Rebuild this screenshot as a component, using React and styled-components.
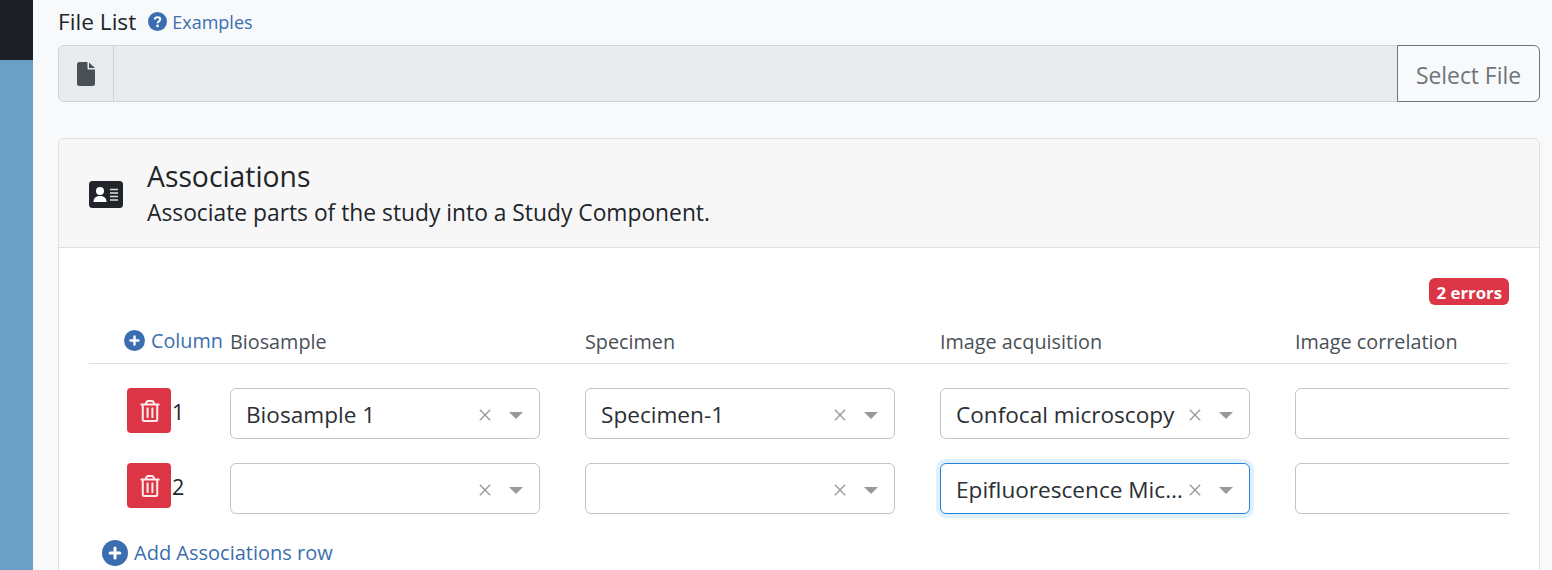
import React from 'react'
import styled, { createGlobalStyle } from 'styled-components'
import { FaRegTrashAlt } from 'react-icons/fa'

const Global = createGlobalStyle`
  html, body { margin: 0; height: 570px; overflow: hidden; }
  body { font-family: "Open Sans", "Noto Sans", sans-serif; color: #212529; background: #f8f9fa; }
  * { box-sizing: border-box; }
`

const Page = styled.div`
  display: flex;
  height: 570px;
  overflow: hidden;
`
const Sidebar = styled.aside`
  width: 33px;
  flex: none;
  background: #6b9fc3;
  &::before { content: ''; display: block; height: 60px; background: #1c2024; }
`
const Main = styled.main`
  flex: 1;
  min-width: 0;
  padding: 6px 12px 0 25px;
`
const LabelRow = styled.div`
  display: flex;
  align-items: center;
  height: 31px;
  margin-bottom: 8px;
`
const Label = styled.span`
  font-size: 22.7px;
  margin-right: 12px;
`
const LinkText = styled.a`
  color: #3b6eb0;
  font-size: ${p => p.$size || 18}px;
  display: inline-flex;
  align-items: center;
  gap: ${p => p.$gap || 6}px;
`
const FileGroup = styled.div`
  display: flex;
  height: 57px;
`
const FileIconBox = styled.div`
  width: 56px;
  display: flex;
  align-items: center;
  justify-content: center;
  background: #e9ecef;
  border: 1px solid #ced4da;
  border-radius: 6px 0 0 6px;
`
const FileInput = styled.div`
  flex: 1;
  background: #e9ecef;
  border-top: 1px solid #ced4da;
  border-bottom: 1px solid #ced4da;
`
const SelectFile = styled.button`
  width: 143px;
  padding: 4px 0 0;
  font: inherit;
  font-size: 22.8px;
  color: #6c757d;
  background: transparent;
  border: 1px solid #6c757d;
  border-radius: 0 6px 6px 0;
`
const Card = styled.section`
  margin-top: 36px;
  background: #fff;
  border: 1px solid #dfdfdf;
  border-radius: 6px 6px 0 0;
  height: 450px;
`
const CardHeader = styled.header`
  height: 109px;
  display: flex;
  align-items: center;
  padding: 2px 0 0 30px;
  gap: 24px;
  background: #f7f7f7;
  border-bottom: 1px solid #dfdfdf;
  border-radius: 6px 6px 0 0;
`
const Title = styled.h5`
  margin: -1px 0 1px;
  font-size: 28.3px;
  font-weight: 400;
  line-height: 36px;
`
const Subtitle = styled.div`
  padding-top: 2px;
  font-size: 22.8px;
  line-height: 32px;
`
const CardBody = styled.div`
  padding: 30px 30px 0;
`
const BadgeRow = styled.div`
  display: flex;
  justify-content: flex-end;
  height: 46px;
`
const Badge = styled.span`
  height: 27px;
  padding: 1px 7px 0 8px;
  display: flex;
  align-items: center;
  background: #dc3545;
  color: #fff;
  border-radius: 6px;
  font-size: 16.8px;
  font-weight: 700;
`
const Table = styled.div`
  overflow: hidden;
`
const Row = styled.div`
  display: grid;
  grid-template-columns: 96px repeat(4, 310px);
  column-gap: 45px;
  width: 1600px;
`
const HeadRow = styled(Row)`
  height: 40px;
  align-items: center;
  width: 100%;
  padding-bottom: 4px;
  border-bottom: 1px solid #dee2e6;
  margin-bottom: 24px;
`
const HeadCell = styled.div`
  font-size: 19.8px;
  color: #495057;
  white-space: nowrap;
`
const ColumnLink = styled.div`
  padding-left: 35px;
  white-space: nowrap;
`
const BodyRow = styled(Row)`
  margin-bottom: 24px;
  height: 51px;
`
const RowHead = styled.div`
  display: flex;
  align-items: flex-start;
  gap: 1px;
  padding-left: 38px;
  font-size: 21.500px;
  line-height: 48px;
`
const Trash = styled.button`
  width: 44px;
  height: 45px;
  border: 0;
  padding: 0 0 0 1px;
  border-radius: 4px;
  background: #dc3545;
  color: #fbe9eb;
  font-size: 22px;
  display: flex;
  align-items: center;
  justify-content: center;
`
const Select = styled.div`
  height: 51px;
  display: flex;
  align-items: center;
  padding: 2px 15px 0;
  background: #fff;
  border: 1px solid ${p => (p.$focus ? '#2684d8' : '#c4c4c4')};
  border-radius: 6px;
  box-shadow: ${p => (p.$focus ? '0 0 0 4px #e0f0fe' : 'none')};
`
const Value = styled.span`
  flex: 1;
  min-width: 0;
  font-size: 22.6px;
  color: #2b2f33;
  white-space: nowrap;
  overflow: hidden;
  text-overflow: ellipsis;
`
const Clear = styled.svg`
  flex: none;
  width: 12px;
  height: 12px;
  margin-left: 4px;
  margin-right: 18px;
  stroke: #999;
  stroke-width: 1.6;
`
const Caret = styled.span`
  flex: none;
  width: 0;
  height: 0;
  margin: 1px 1px 0 0;
  border-left: 7px solid transparent;
  border-right: 7px solid transparent;
  border-top: 7px solid #999;
`
const AddRow = styled.div`
  margin: 1px 0 0 13px;
`

function PlusCircle({ size }) {
  return (
    <svg width={size} height={size} viewBox="0 0 24 24">
      <circle cx="12" cy="12" r="12" fill="#3b6eb0" />
      <path d="M12 7.500v9M7.500 12h9" stroke="#fff" strokeWidth="2.800" strokeLinecap="round" />
    </svg>
  )
}

function QuestionCircle({ size }) {
  return (
    <svg width={size} height={size} viewBox="0 0 24 24">
      <circle cx="12" cy="12" r="12" fill="#3b6eb0" />
      <path d="M8.600 9.600c0-2 1.500-3 3.400-3s3.400 1.100 3.400 2.900c0 2.600-3.400 2.400-3.400 4.700" fill="none" stroke="#fff" strokeWidth="2.600" />
      <circle cx="12" cy="17.600" r="1.700" fill="#fff" />
    </svg>
  )
}

function FileGlyph() {
  return (
    <svg width="18" height="24" viewBox="0 0 18 24">
      <path d="M2.500 0H10.500V6.500a1 1 0 0 0 1 1H18V21.500a2.500 2.500 0 0 1-2.500 2.500H2.500A2.500 2.500 0 0 1 0 21.500V2.500A2.500 2.500 0 0 1 2.500 0z" fill="#495057" />
      <path d="M12 0.500L18 6H12z" fill="#495057" />
    </svg>
  )
}

function IdCard() {
  return (
    <svg width="34" height="27" viewBox="0 0 34 27">
      <rect width="34" height="27" rx="3.500" fill="#212529" />
      <circle cx="11" cy="10" r="4" fill="#fff" />
      <path d="M4.500 21c0-4 2.600-6 6.500-6s6.500 2 6.500 6z" fill="#fff" />
      <path d="M21 8.500h8M21 12h8M21 15.500h8M21 19h8" stroke="#fff" strokeWidth="1.500" opacity="0.85" />
    </svg>
  )
}

function AssocSelect({ value, focus }) {
  return (
    <Select $focus={focus}>
      <Value>{value}</Value>
      <Clear viewBox="0 0 14 14"><path d="M1 1l12 12M13 1L1 13" /></Clear>
      <Caret />
    </Select>
  )
}

const rows = [
  { n: 1, values: ['Biosample 1', 'Specimen-1', 'Confocal microscopy', ''] },
  { n: 2, values: ['', '', 'Epifluorescence Microscopy', ''] },
]

export default function App() {
  return (
    <Page>
      <Global />
      <Sidebar />
      <Main>
        <LabelRow>
          <Label>File List</Label>
          <LinkText $gap={5}><QuestionCircle size={19} />Examples</LinkText>
        </LabelRow>
        <FileGroup>
          <FileIconBox><FileGlyph /></FileIconBox>
          <FileInput />
          <SelectFile>Select File</SelectFile>
        </FileGroup>
        <Card>
          <CardHeader>
            <IdCard />
            <div>
              <Title>Associations</Title>
              <Subtitle>Associate parts of the study into a Study Component.</Subtitle>
            </div>
          </CardHeader>
          <CardBody>
            <BadgeRow><Badge>2 errors</Badge></BadgeRow>
            <Table>
              <HeadRow>
                <ColumnLink><LinkText $size={19.8} $gap={6}><PlusCircle size={21} />Column</LinkText></ColumnLink>
                <HeadCell>Biosample</HeadCell>
                <HeadCell>Specimen</HeadCell>
                <HeadCell>Image acquisition</HeadCell>
                <HeadCell>Image correlation</HeadCell>
              </HeadRow>
              {rows.map((r) => (
                <BodyRow key={r.n}>
                  <RowHead>
                    <Trash><FaRegTrashAlt /></Trash>
                    {r.n}
                  </RowHead>
                  {r.values.map((v, i) => (
                    i === 3
                      ? <Select key={i} />
                      : <AssocSelect key={i} value={v} focus={r.n === 2 && i === 2} />
                  ))}
                </BodyRow>
              ))}
            </Table>
            <AddRow><LinkText $size={20} $gap={6}><PlusCircle size={26} />Add Associations row</LinkText></AddRow>
          </CardBody>
        </Card>
      </Main>
    </Page>
  )
}
